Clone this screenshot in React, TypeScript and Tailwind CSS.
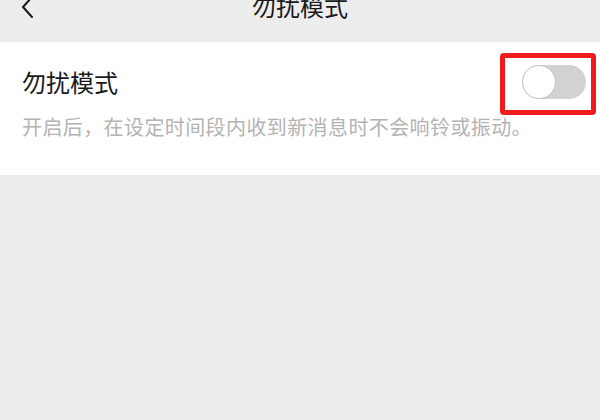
import React from 'react';

const FONT = { fontFamily: '"Noto Sans CJK SC", "Noto Sans", sans-serif' };

export default function App() {
  return (
    <div className="w-[600px] h-[420px] bg-[#ededed] overflow-hidden" style={FONT}>
      {/* Header */}
      <header className="relative h-[42px] flex justify-center">
        <svg className="absolute left-[20px] top-[-4px]" width="16" height="24" viewBox="0 0 16 24" fill="none">
          <path d="M12 1 L3 11 L12 21" stroke="#1a1a1a" strokeWidth="2" strokeLinecap="round" strokeLinejoin="round" />
        </svg>
        <h1 className="text-[24px] leading-[24px] mt-[-6px] text-[#1a1a1a] font-normal">勿扰模式</h1>
      </header>

      {/* Setting card */}
      <section className="bg-white pt-[23px] pb-[38px] pl-[22px]">
        <div className="flex items-start justify-between pr-[14px]">
          <span className="mt-[5px] text-[24px] leading-[24px] text-[#1a1a1a]">勿扰模式</span>
          <div className="relative">
            <div className="absolute left-[-22px] right-[-10px] top-[-12px] bottom-[-16px] border-[5px] border-[#ee1c1c] rounded-[4px]" />
            <div className="w-[64px] h-[34px] rounded-full bg-[#d2d2d2] flex items-center">
              <div className="w-[34px] h-[34px] rounded-full bg-white border-[1.5px] border-[#c4c4c4]" />
            </div>
          </div>
        </div>
        <p className="mt-[18px] text-[20px] leading-[20px] tracking-[0.4px] text-[#b3b3b3]">
          开启后，在设定时间段内收到新消息时不会响铃或振动。
        </p>
      </section>
    </div>
  );
}
